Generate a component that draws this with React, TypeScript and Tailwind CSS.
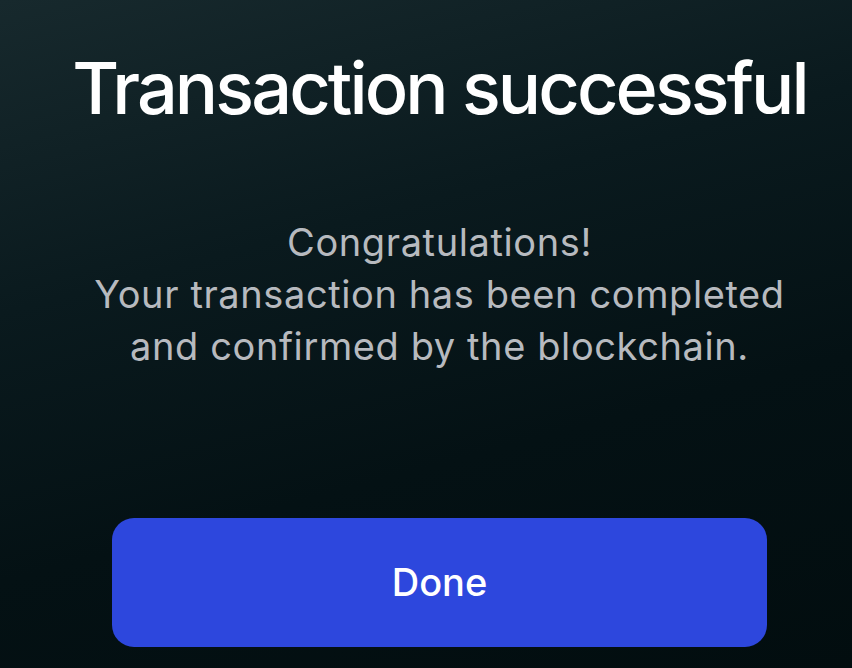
import React from "react";

export default function App() {
  return (
    <div
      className="w-[852px] h-[668px] overflow-hidden bg-[linear-gradient(165deg,#17292d_0%,#0a1a1e_35%,#041114_65%,#020d0f_100%)] pl-[27px] flex flex-col items-center text-center"
      style={{ fontFamily: "Inter, 'Noto Sans', sans-serif" }}
    >
      {/* Title */}
      <h1 className="mt-[52px] whitespace-nowrap text-[72px] leading-[72px] font-medium tracking-[-2.9px] text-white">
        Transaction successful
      </h1>

      {/* Message */}
      <div className="mt-[92px] text-[38px] leading-[52px] tracking-[0.6px] text-[#b7babf]">
        <p>Congratulations!</p>
        <p>
          Your transaction has been completed
          <br />
          and confirmed by the blockchain.
        </p>
      </div>

      {/* Action */}
      <button className="mt-[146px] w-[655px] h-[129px] shrink-0 rounded-[22px] bg-[#2d47dd] text-white text-[38px] font-medium">
        Done
      </button>
    </div>
  );
}
